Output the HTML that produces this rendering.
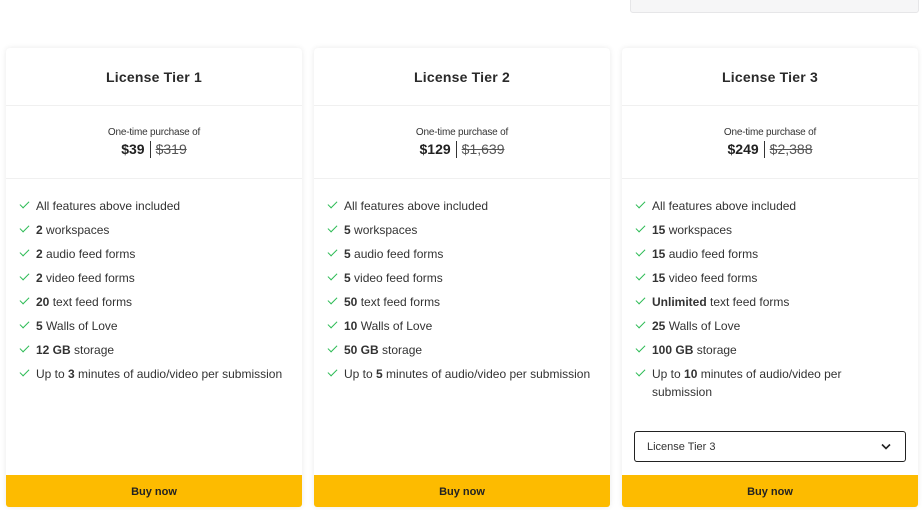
<!DOCTYPE html><html><head><style>
body{margin:0;width:922px;height:507px;background:#fff;font-family:"Liberation Sans",sans-serif;position:relative;overflow:hidden;color:#222}
.top{position:absolute;left:630px;top:-2px;width:287px;height:13px;background:#f6f6f7;border:1px solid #e6e6e8;border-radius:0 0 3px 3px}
.card{position:absolute;top:48px;width:296px;height:459px;background:#fff;border-radius:4px;box-shadow:0 0 6px rgba(0,0,0,.09)}
.h{height:57px;border-bottom:1px solid #f0f0f0;text-align:center;line-height:58px;font-size:14px;font-weight:bold;color:#2a2a2a;letter-spacing:.2px}
.p{height:72px;border-bottom:1px solid #f0f0f0;text-align:center}
.p .s{font-size:10px;color:#333;padding-top:20px;line-height:13px;letter-spacing:-.2px}
.p .v{font-size:14px;line-height:19px;margin-top:1px}
.p b{margin-right:5px}
.p .bar{display:inline-block;width:1px;height:17px;background:#333;vertical-align:-4px;margin-right:5px}
.p del{color:#555}
ul{list-style:none;margin:0;padding:18px 0 0 12px}
li{font-size:12px;line-height:18px;margin-bottom:6px;padding-left:18px;position:relative;color:#333;padding-right:10px}
li:before{content:"";position:absolute;left:2px;top:4px;width:8px;height:4px;border-left:1.3px solid #2dbb55;border-bottom:1.3px solid #2dbb55;transform:rotate(-45deg)}
.btn{position:absolute;left:0;right:0;bottom:0;height:32px;background:#fdbb00;text-align:center;line-height:35px;font-size:11px;font-weight:bold;color:#222;border-radius:0 0 3px 3px}
.sel{position:absolute;left:12px;top:383px;width:272px;height:31px;border:1px solid #222;border-radius:3px;font-size:11px;line-height:31px;padding-left:12px;box-sizing:border-box;color:#333}
.sel svg{position:absolute;right:14px;top:11px}
</style></head><body>
<div class="top"></div>
<div class="card" style="left:6px"><div class="h">License Tier 1</div><div class="p"><div class="s">One-time purchase of</div><div class="v"><b>$39</b><span class="bar"></span><del>$319</del></div></div>
<ul><li>All features above included</li><li><b>2</b> workspaces</li><li><b>2</b> audio feed forms</li><li><b>2</b> video feed forms</li><li><b>20</b> text feed forms</li><li><b>5</b> Walls of Love</li><li><b>12 GB</b> storage</li><li>Up to <b>3</b> minutes of audio/video per submission</li></ul><div class="btn">Buy now</div></div>
<div class="card" style="left:314px"><div class="h">License Tier 2</div><div class="p"><div class="s">One-time purchase of</div><div class="v"><b>$129</b><span class="bar"></span><del>$1,639</del></div></div>
<ul><li>All features above included</li><li><b>5</b> workspaces</li><li><b>5</b> audio feed forms</li><li><b>5</b> video feed forms</li><li><b>50</b> text feed forms</li><li><b>10</b> Walls of Love</li><li><b>50 GB</b> storage</li><li>Up to <b>5</b> minutes of audio/video per submission</li></ul><div class="btn">Buy now</div></div>
<div class="card" style="left:622px"><div class="h">License Tier 3</div><div class="p"><div class="s">One-time purchase of</div><div class="v"><b>$249</b><span class="bar"></span><del>$2,388</del></div></div>
<ul><li>All features above included</li><li><b>15</b> workspaces</li><li><b>15</b> audio feed forms</li><li><b>15</b> video feed forms</li><li><b>Unlimited</b> text feed forms</li><li><b>25</b> Walls of Love</li><li><b>100 GB</b> storage</li><li style="padding-right:60px">Up to <b>10</b> minutes of audio/video per submission</li></ul>
<div class="sel">License Tier 3<svg width="10" height="7" viewBox="0 0 10 7"><path d="M1 1.5l4 4 4-4" fill="none" stroke="#222" stroke-width="1.6"/></svg></div><div class="btn">Buy now</div></div>
</body></html>
